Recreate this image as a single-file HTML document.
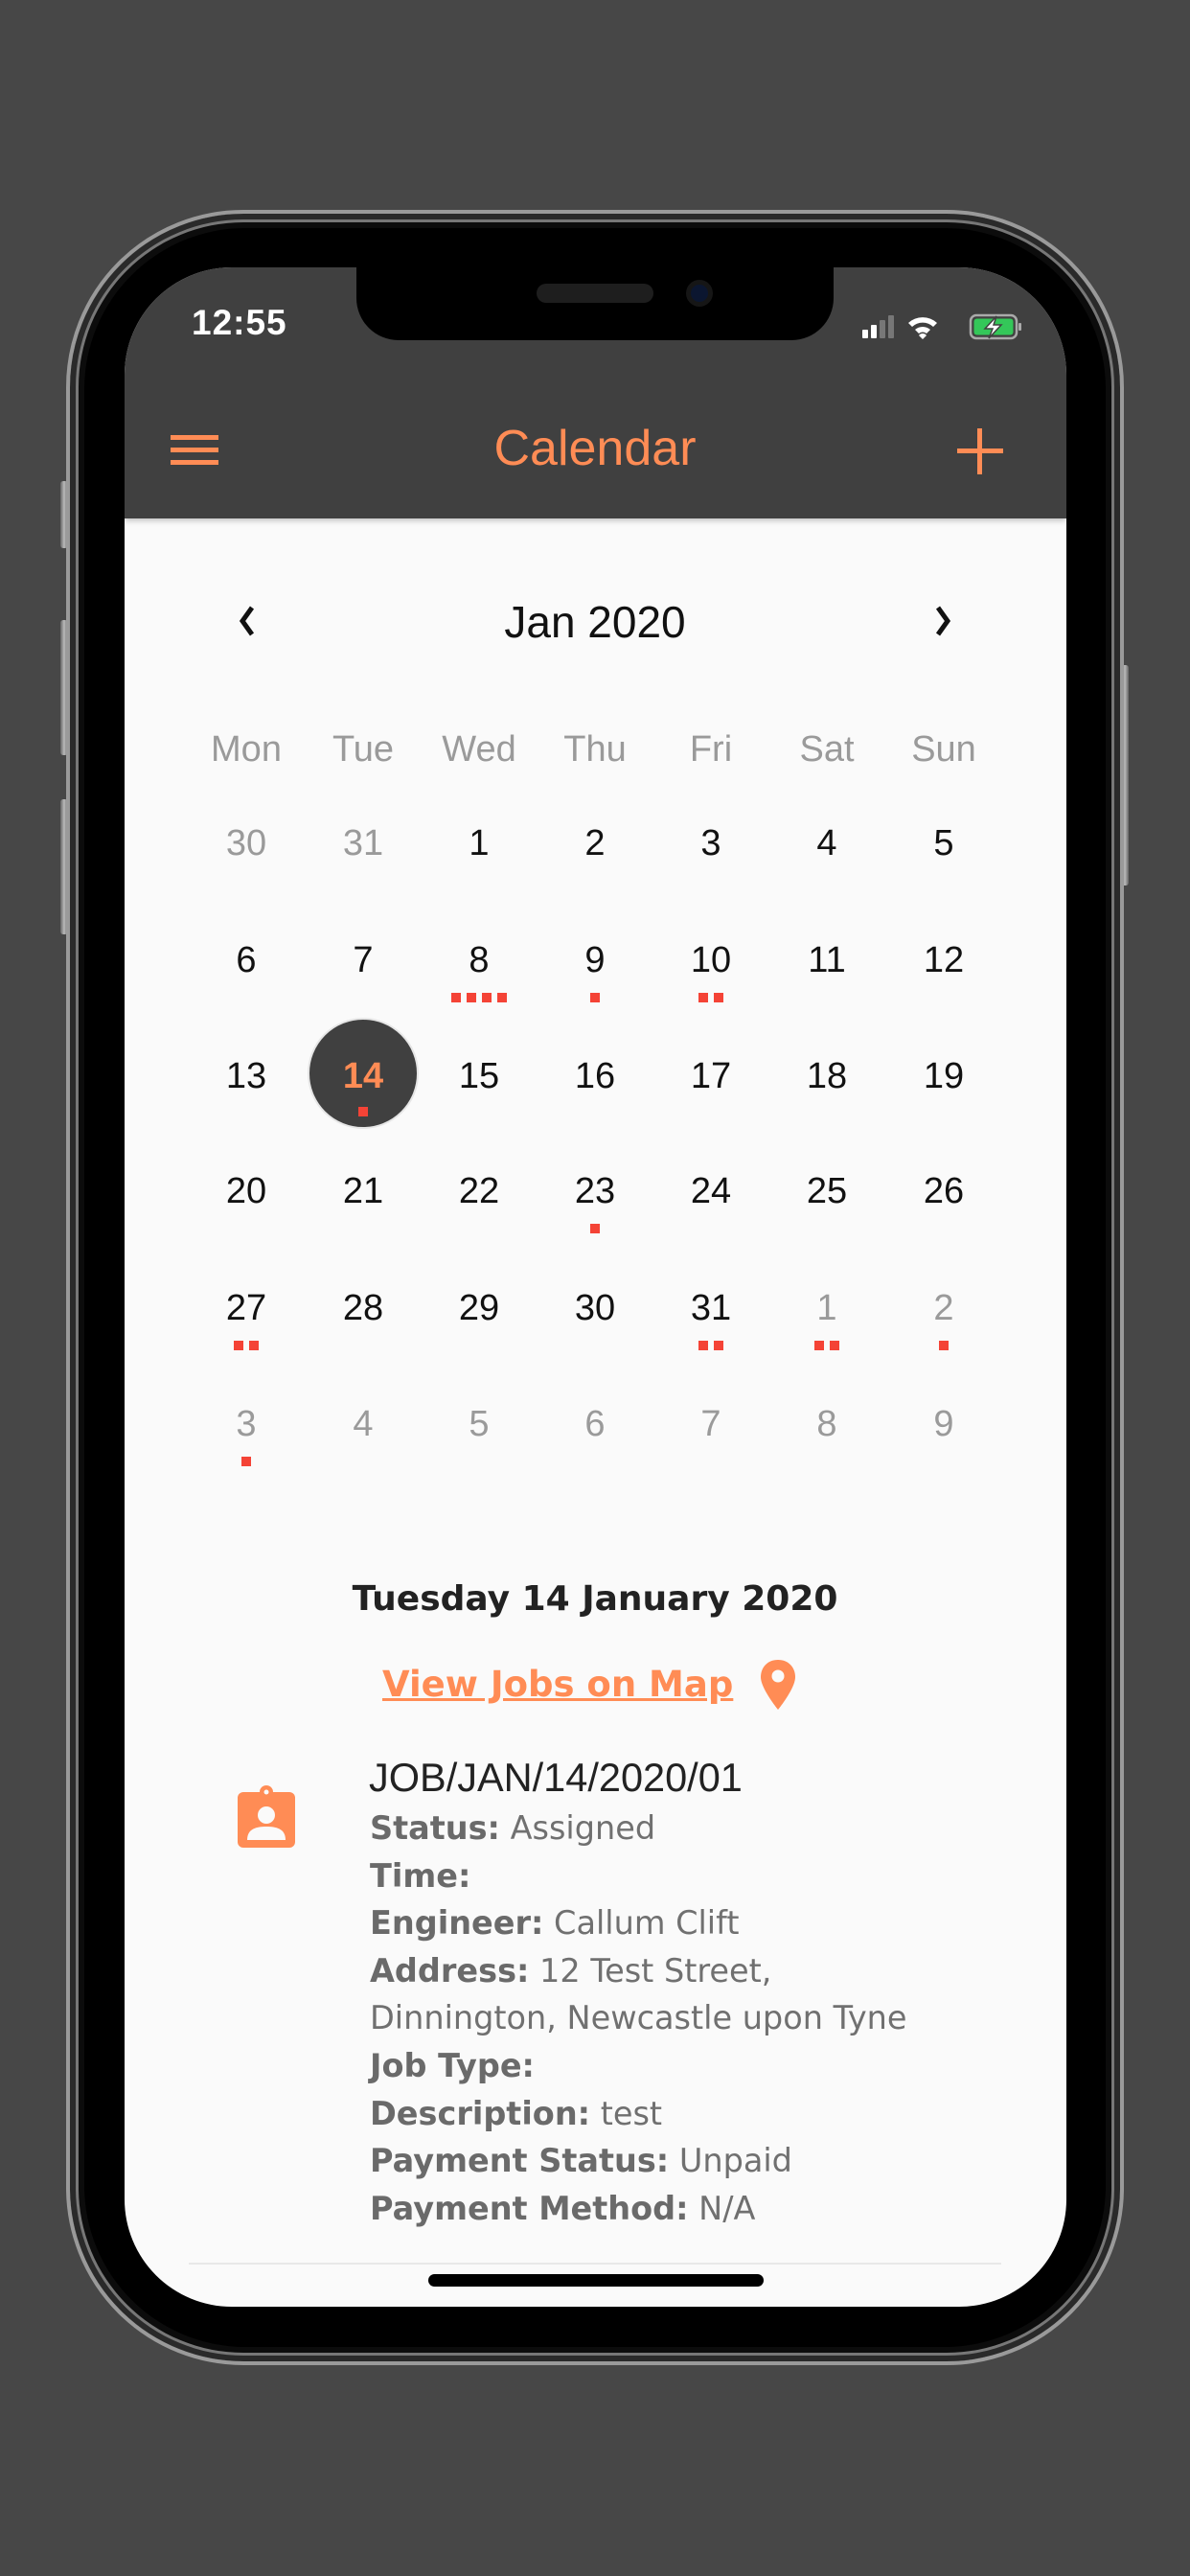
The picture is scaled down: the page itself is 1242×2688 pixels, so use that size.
<!DOCTYPE html>
<html><head><meta charset="utf-8"><style>
*{margin:0;padding:0;box-sizing:border-box}
body{width:1242px;height:2688px;background:#474747;position:relative;overflow:hidden;font-family:"Liberation Sans",sans-serif}
.a{position:absolute}
.btn{position:absolute;background:linear-gradient(90deg,#666,#bbb,#666);border-radius:3px}
.c{position:absolute;width:120px;text-align:center;transform:translateX(-50%)}
.day{font-size:38px;color:#111;line-height:40px;margin-top:3px}
.g{color:#9a9a9a}
.dots{position:absolute;display:flex;gap:6px;transform:translateX(-50%)}
.dots i{width:10px;height:10px;background:#F44336;display:block}
.row{font-family:"DejaVu Sans",sans-serif;font-size:33.5px;line-height:49.6px;color:#707070}
.row b{color:#6a6a6a}
</style></head><body>
<div class="btn" style="left:63px;top:502px;width:8px;height:70px"></div>
<div class="btn" style="left:63px;top:647px;width:8px;height:141px"></div>
<div class="btn" style="left:63px;top:834px;width:8px;height:141px"></div>
<div class="btn" style="left:1170px;top:694px;width:8px;height:230px"></div>
<div class="a" style="left:69px;top:219px;width:1104px;height:2249px;border-radius:185px;background:#0c0c0c;border:4px solid #9a9a9a;box-shadow:inset 0 0 0 6px #2a2a2a,inset 0 0 0 9px #777"></div>
<div class="a" style="left:88px;top:238px;width:1066px;height:2211px;border-radius:168px;background:#000"></div>
<div class="a" style="left:130px;top:279px;width:983px;height:2128px;border-radius:112px;background:#fafafa;overflow:hidden">
  <div class="a" style="left:0;top:0;width:983px;height:262px;background:#404040;box-shadow:0 2px 6px rgba(0,0,0,.25)"></div>
</div>
<div class="a" style="left:372px;top:270px;width:498px;height:85px;background:#000;border-radius:0 0 44px 44px"></div>
<div class="a" style="left:560px;top:296px;width:122px;height:20px;background:#1e1e1e;border-radius:10px"></div>
<div class="a" style="left:716px;top:292px;width:28px;height:28px;background:#0b1630;border-radius:50%;border:5px solid #161616"></div>
<div class="a" style="left:200px;top:316px;font-size:37px;color:#fff;font-weight:bold;letter-spacing:1px">12:55</div>
<svg class="a" style="left:898px;top:326px" width="180" height="30" viewBox="0 0 180 30">
<rect x="2" y="18" width="6" height="9" rx="1" fill="#fff"/><rect x="11" y="13" width="6" height="14" rx="1" fill="#fff"/><rect x="20" y="8" width="6" height="19" rx="1" fill="#777"/><rect x="29" y="3" width="6" height="24" rx="1" fill="#777"/>
<path d="M50 11 A22 22 0 0 1 80 11 L76 15 A16 16 0 0 0 54 15Z M57 18 A12 12 0 0 1 73 18 L69 22 A6 6 0 0 0 61 22Z M65 28 L61 24 A5 5 0 0 1 69 24Z" fill="#fff"/>
<rect x="115" y="3" width="48" height="24" rx="6" fill="none" stroke="#aaa" stroke-width="2.5"/><rect x="118.5" y="6.5" width="41" height="17" rx="3" fill="#34c759"/><rect x="165" y="11" width="3" height="8" rx="1" fill="#aaa"/>
<path d="M142 4 L130 17 L138 17 L134 27 L147 13 L139 13 Z" fill="#fff" stroke="#404040" stroke-width="1.5"/>
</svg>
<div class="a" style="left:178px;top:454px;width:50px;height:5px;background:#ff8c55"></div>
<div class="a" style="left:178px;top:467px;width:50px;height:5px;background:#ff8c55"></div>
<div class="a" style="left:178px;top:480px;width:50px;height:5px;background:#ff8c55"></div>
<div class="a" style="left:0;width:1242px;top:438px;text-align:center;font-size:52px;color:#ff8c55">Calendar</div>
<div class="a" style="left:999px;top:468px;width:48px;height:5px;background:#ff8c55"></div>
<div class="a" style="left:1020px;top:447px;width:5px;height:48px;background:#ff8c55"></div>
<svg class="a" style="left:247px;top:630px" width="24" height="36"><path d="M16 4 L6 18 L16 32" stroke="#111" stroke-width="5" fill="none"/></svg>
<svg class="a" style="left:971px;top:630px" width="24" height="36"><path d="M8 4 L18 18 L8 32" stroke="#111" stroke-width="5" fill="none"/></svg>
<div class="a" style="left:0;width:1242px;top:622px;text-align:center;font-size:46px;color:#111">Jan 2020</div>
<div class="c day g" style="left:257px;top:759px">Mon</div>
<div class="c day g" style="left:379px;top:759px">Tue</div>
<div class="c day g" style="left:500px;top:759px">Wed</div>
<div class="c day g" style="left:621px;top:759px">Thu</div>
<div class="c day g" style="left:742px;top:759px">Fri</div>
<div class="c day g" style="left:863px;top:759px">Sat</div>
<div class="c day g" style="left:985px;top:759px">Sun</div>
<div class="a" style="left:321px;top:1062px;width:116px;height:116px;border-radius:50%;background:#404040;border:2px solid #e6e6e6"></div>
<div class="c day" style="left:379px;top:1100px;color:#ff8c55;font-weight:bold">14</div>
<div class="dots" style="left:379px;top:1155px"><i></i></div>
<div class="c day g" style="left:257px;top:857px">30</div><div class="c day g" style="left:379px;top:857px">31</div><div class="c day" style="left:500px;top:857px">1</div><div class="c day" style="left:621px;top:857px">2</div><div class="c day" style="left:742px;top:857px">3</div><div class="c day" style="left:863px;top:857px">4</div><div class="c day" style="left:985px;top:857px">5</div>
<div class="c day" style="left:257px;top:979px">6</div><div class="c day" style="left:379px;top:979px">7</div><div class="c day" style="left:500px;top:979px">8</div><div class="c day" style="left:621px;top:979px">9</div><div class="c day" style="left:742px;top:979px">10</div><div class="c day" style="left:863px;top:979px">11</div><div class="c day" style="left:985px;top:979px">12</div>
<div class="dots" style="left:500px;top:1036px"><i></i><i></i><i></i><i></i></div>
<div class="dots" style="left:621px;top:1036px"><i></i></div>
<div class="dots" style="left:742px;top:1036px"><i></i><i></i></div>
<div class="c day" style="left:257px;top:1100px">13</div><div class="c day" style="left:500px;top:1100px">15</div><div class="c day" style="left:621px;top:1100px">16</div><div class="c day" style="left:742px;top:1100px">17</div><div class="c day" style="left:863px;top:1100px">18</div><div class="c day" style="left:985px;top:1100px">19</div>
<div class="c day" style="left:257px;top:1220px">20</div><div class="c day" style="left:379px;top:1220px">21</div><div class="c day" style="left:500px;top:1220px">22</div><div class="c day" style="left:621px;top:1220px">23</div><div class="c day" style="left:742px;top:1220px">24</div><div class="c day" style="left:863px;top:1220px">25</div><div class="c day" style="left:985px;top:1220px">26</div>
<div class="dots" style="left:621px;top:1277px"><i></i></div>
<div class="c day" style="left:257px;top:1342px">27</div><div class="c day" style="left:379px;top:1342px">28</div><div class="c day" style="left:500px;top:1342px">29</div><div class="c day" style="left:621px;top:1342px">30</div><div class="c day" style="left:742px;top:1342px">31</div><div class="c day g" style="left:863px;top:1342px">1</div><div class="c day g" style="left:985px;top:1342px">2</div>
<div class="dots" style="left:257px;top:1399px"><i></i><i></i></div>
<div class="dots" style="left:742px;top:1399px"><i></i><i></i></div>
<div class="dots" style="left:863px;top:1399px"><i></i><i></i></div>
<div class="dots" style="left:985px;top:1399px"><i></i></div>
<div class="c day g" style="left:257px;top:1463px">3</div><div class="c day g" style="left:379px;top:1463px">4</div><div class="c day g" style="left:500px;top:1463px">5</div><div class="c day g" style="left:621px;top:1463px">6</div><div class="c day g" style="left:742px;top:1463px">7</div><div class="c day g" style="left:863px;top:1463px">8</div><div class="c day g" style="left:985px;top:1463px">9</div>
<div class="dots" style="left:257px;top:1520px"><i></i></div>
<div class="a" style="left:0;width:1242px;top:1648px;text-align:center;font-family:'DejaVu Sans',sans-serif;font-size:36px;font-weight:bold;color:#222">Tuesday 14 January 2020</div>
<div class="a" style="left:399px;top:1736px;font-family:'DejaVu Sans',sans-serif;font-size:37px;font-weight:bold;color:#ff8c55;text-decoration:underline">View Jobs on Map</div>
<svg class="a" style="left:792px;top:1730px" width="40" height="56" viewBox="0 0 40 56"><path d="M20 2 C9 2 2 10 2 20 C2 32 20 54 20 54 C20 54 38 32 38 20 C38 10 31 2 20 2Z" fill="#ff8c55"/><circle cx="20" cy="19" r="6.5" fill="#fafafa"/></svg>
<svg class="a" style="left:248px;top:1862px" width="60" height="66" viewBox="0 0 60 66"><rect x="0" y="8" width="60" height="58" rx="6" fill="#ff8c55"/><circle cx="30" cy="8" r="7" fill="#ff8c55"/><circle cx="30" cy="8" r="2.5" fill="#fafafa"/><circle cx="30" cy="32" r="9" fill="#fafafa"/><path d="M10 58 C10 46 20 44 30 44 C40 44 50 46 50 58Z" fill="#fafafa"/></svg>
<div class="a" style="left:385px;top:1831px;font-size:41.5px;color:#222">JOB/JAN/14/2020/01</div>
<div class="a row" style="left:386px;top:1883px;width:740px">
<div><b>Status:</b> Assigned</div>
<div><b>Time:</b></div>
<div><b>Engineer:</b> Callum Clift</div>
<div><b>Address:</b> 12 Test Street,</div>
<div>Dinnington, Newcastle upon Tyne</div>
<div><b>Job Type:</b></div>
<div><b>Description:</b> test</div>
<div><b>Payment Status:</b> Unpaid</div>
<div><b>Payment Method:</b> N/A</div>
</div>
<div class="a" style="left:197px;top:2361px;width:848px;height:2px;background:#e8e8e8"></div>
<div class="a" style="left:447px;top:2373px;width:350px;height:13px;border-radius:7px;background:#000"></div>
</body></html>
